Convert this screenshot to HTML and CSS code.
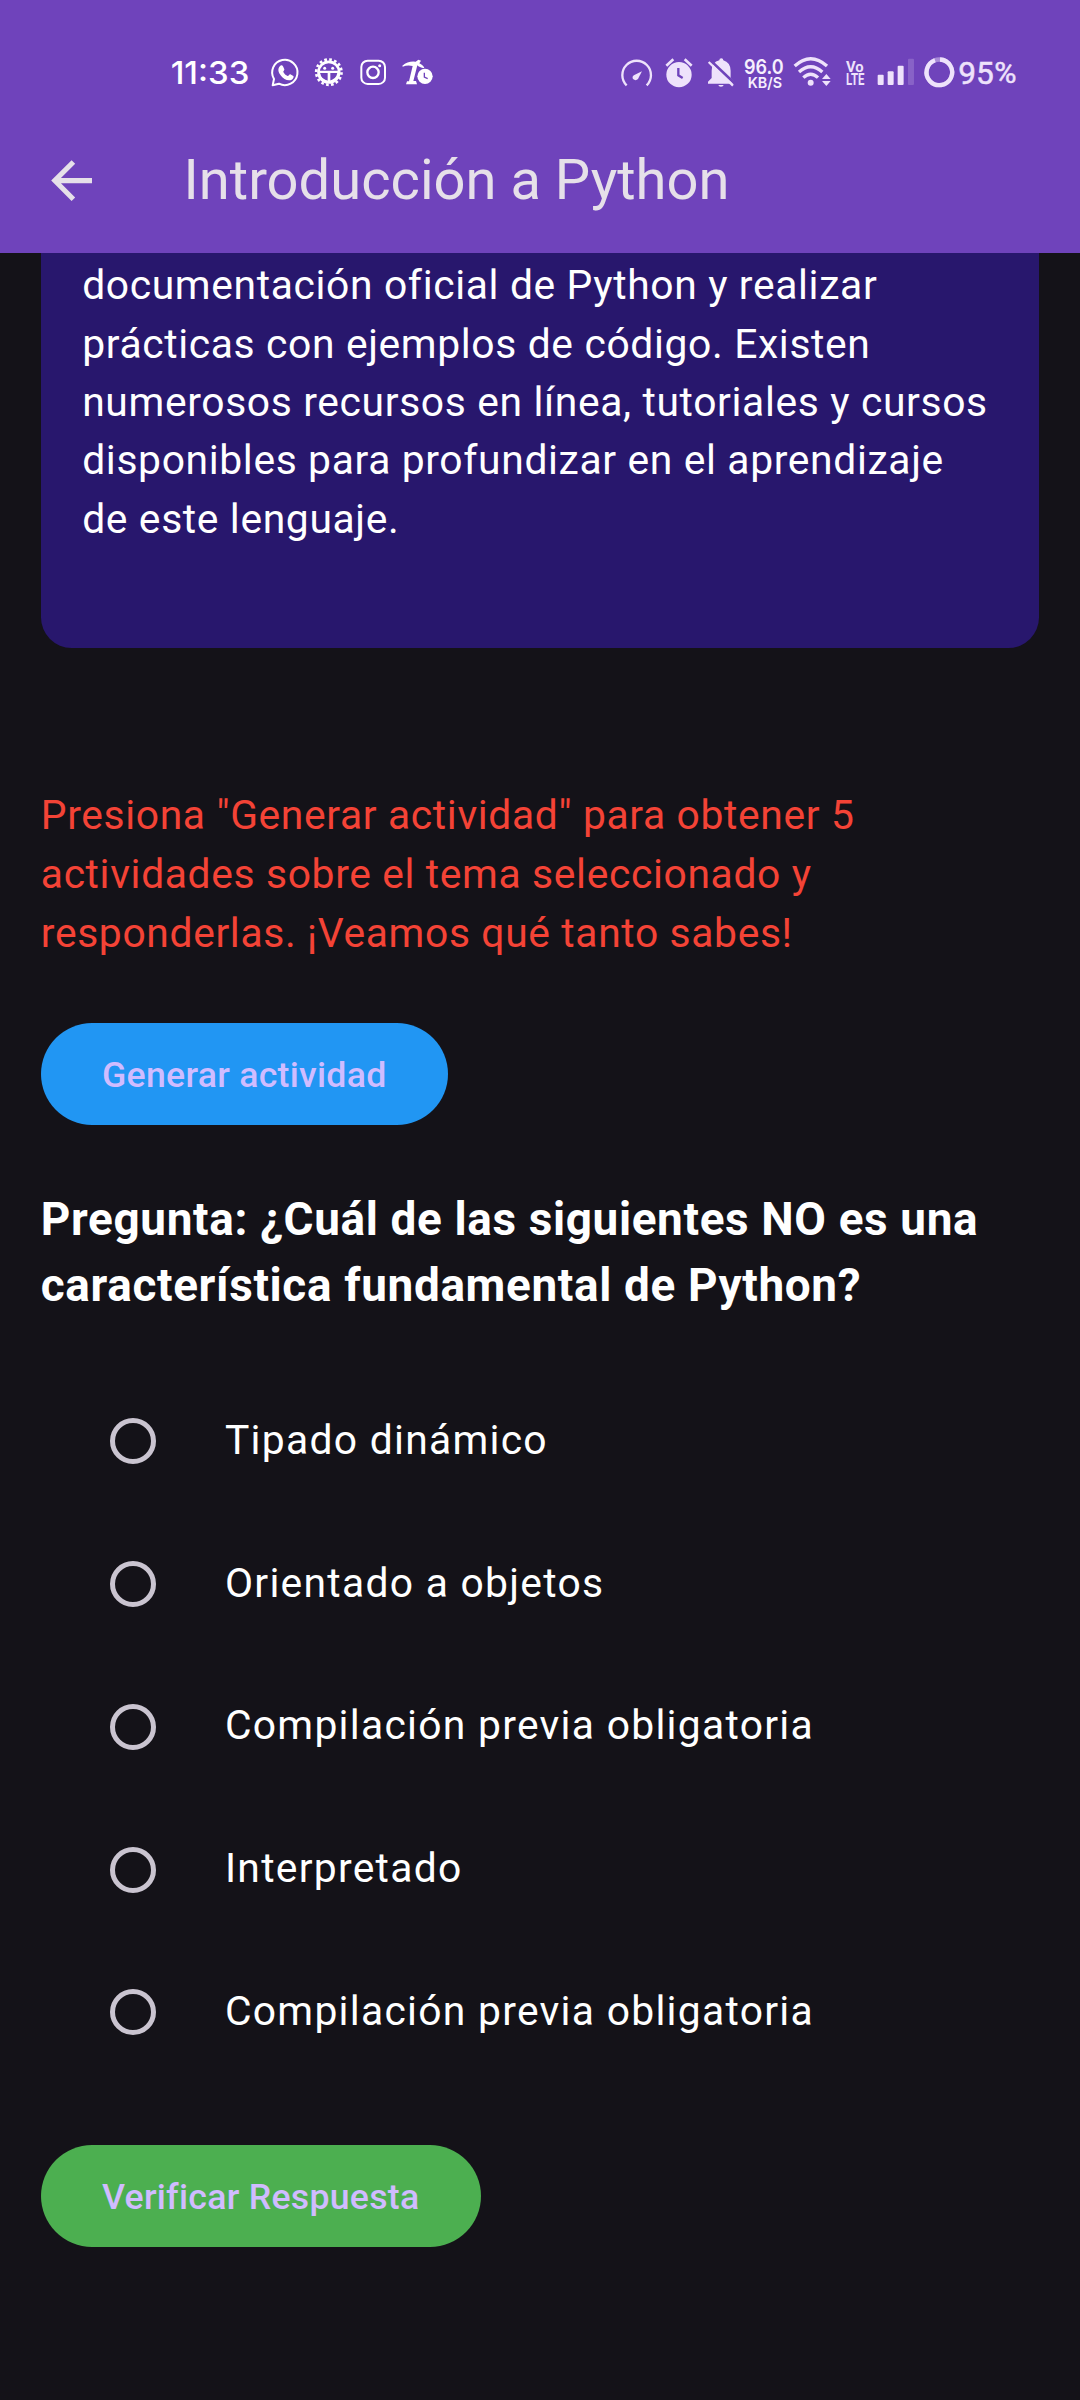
FILE: index.html
```html
<!DOCTYPE html>
<html lang="es">
<head>
<meta charset="utf-8">
<title>Introducción a Python</title>
<link rel="stylesheet" href="styles.css">
</head>
<body>
<div class="screen">
  <header class="top">
    <div class="status">
      <svg class="s-time" viewBox="60 50 240 90"><text x="62" y="131" font-size="95" font-weight="500" textLength="236" lengthAdjust="spacingAndGlyphs">11:33</text></svg>
      <svg class="s-whatsapp" viewBox="360 50 90 90"><path d="M372 116A38 38 0 1 1 387 130L368 135Z" fill="none" stroke="currentColor" stroke-width="6" stroke-linejoin="round"/><path d="M390 77c4-4 8-2 10 3l3 7c1 3-4 6-3 8 3 6 7 9 13 12 3 1 5-6 8-5l9 5c3 2-1 9-5 11-12 5-25-3-32-12-7-8-12-20-3-29z"/></svg>
      <svg class="s-gear" viewBox="493 50 90 90"><circle cx="537.500" cy="95.500" r="38" fill="none" stroke="currentColor" stroke-width="8" stroke-dasharray="8 6.920"/><circle cx="537.500" cy="95.500" r="31" fill="none" stroke="currentColor" stroke-width="8"/><path d="M505 91H570V98H542V128H534V98H505Z"/><circle cx="525" cy="84" r="4.500"/><circle cx="549" cy="84" r="4.500"/><path d="M511 98Q514 117 537 122Q560 117 563 98L570 98Q565 128 537 128Q510 128 505 98Z"/></svg>
      <svg class="s-insta" viewBox="624 50 90 90"><rect x="634" y="61" width="71" height="70" rx="19" fill="none" stroke="currentColor" stroke-width="6"/><circle cx="669" cy="96" r="17" fill="none" stroke="currentColor" stroke-width="7"/><circle cx="689" cy="76" r="4.500"/></svg>
      <svg class="s-pick" viewBox="752 50 98 90"><path d="M756 76Q774 61 796 64L804 58L812 61L807 69Q821 77 822 84Q806 81 801 75L789 122H797L800 132H767L770 123H776L787 77Q772 73 757 79Z"/><circle cx="824" cy="108" r="23"/><path d="M822 97V110L832 115" fill="none" class="cut" stroke-width="4"/></svg>

      <div class="status-right">
        <svg class="s-speed" viewBox="60 50 100 90"><path d="M80 135A43 43 0 1 1 140 135" fill="none" stroke="currentColor" stroke-width="7"/><path d="M126 93L114 116Q107 123 99 116Q95 109 103 104Z"/></svg>
        <svg class="s-alarm" viewBox="193 50 90 90"><circle cx="238" cy="103" r="38"/><path d="M200 76L221 57M276 76L255 57" stroke="currentColor" stroke-width="8"/><path d="M236 83V105L249 113" fill="none" class="cut" stroke-width="7"/></svg>
        <svg class="s-bell" viewBox="320 50 85 90"><path d="M323 130V124L334 113V91Q335 65 357 60Q357 54 363 54Q369 54 369 60Q390 66 391 91V113L401 124V130Z"/><path d="M354 134H370Q369 139 362 139Q355 139 354 134Z"/><path d="M329 59L405 131" class="cut" stroke-width="8"/><path d="M325 65L398 136" stroke="currentColor" stroke-width="7"/></svg>
        <svg class="s-net" viewBox="430 50 125 100"><text x="433" y="100" font-size="62" font-weight="600" textLength="119" lengthAdjust="spacingAndGlyphs">96.0</text><text x="444" y="142" font-size="45" font-weight="600" textLength="103" lengthAdjust="spacingAndGlyphs">KB/S</text></svg>
        <svg class="s-wifi" viewBox="580 50 116 90"><g fill="none" stroke="currentColor" stroke-width="10"><path d="M585 77Q633 33 682 77"/><path d="M598 95Q633 63 668 95"/><path d="M611 112Q633 91 655 112"/></g><circle cx="633" cy="127" r="9"/><path d="M667 116L680 101L693 116ZM667 122H693L680 137Z"/></svg>
        <svg class="s-volte" viewBox="74 50 60 90"><text x="77" y="94" font-size="46" font-weight="700" textLength="53" lengthAdjust="spacingAndGlyphs">Vo</text><text x="77" y="134" font-size="50" font-weight="700" textLength="55" lengthAdjust="spacingAndGlyphs">LTE</text></svg>
        <svg class="s-signal" viewBox="172 50 112 90"><rect x="174" y="103" width="18" height="31" rx="3"/><rect x="204" y="93" width="18" height="41" rx="3"/><rect x="234" y="76" width="18" height="58" rx="3"/><rect x="265" y="55" width="18" height="79" rx="3" opacity=".2"/></svg>
        <svg class="s-battery" viewBox="308 50 98 90"><circle cx="357" cy="96" r="38.500" fill="none" stroke="currentColor" stroke-width="13" opacity=".45"/><path d="M359 57.500A38.500 38.500 0 1 1 344 59.700" fill="none" stroke="currentColor" stroke-width="13"/></svg>
        <svg class="s-percent" viewBox="418 50 174 90"><text x="416" y="130" font-size="95" font-weight="400">95</text><text x="524" y="127" font-size="91" font-weight="400">%</text></svg>
      </div>
    </div>
    <div class="appbar">
      <svg class="back" viewBox="0 0 24 24"><path d="M20 11H7.830l5.590-5.590L12 4l-8 8 8 8 1.410-1.410L7.830 13H20v-2z"/></svg>
      <h1>Introducción a Python</h1>
    </div>
  </header>
  <main>
    <section class="card">documentación oficial de Python y realizar<br>prácticas con ejemplos de código. Existen<br>numerosos recursos en línea, tutoriales y cursos<br>disponibles para profundizar en el aprendizaje<br>de este lenguaje.</section>
    <p class="hint">Presiona "Generar actividad" para obtener 5<br>actividades sobre el tema seleccionado y<br>responderlas. ¡Veamos qué tanto sabes!</p>
    <button class="btn btn-blue">Generar actividad</button>
    <h2>Pregunta: ¿Cuál de las siguientes NO es una<br>característica fundamental de Python?</h2>
    <ul class="options">
      <li><i class="radio"></i><span>Tipado dinámico</span></li>
      <li><i class="radio"></i><span>Orientado a objetos</span></li>
      <li><i class="radio"></i><span>Compilación previa obligatoria</span></li>
      <li><i class="radio"></i><span>Interpretado</span></li>
      <li><i class="radio"></i><span>Compilación previa obligatoria</span></li>
    </ul>
    <button class="btn btn-green">Verificar Respuesta</button>
  </main>
</div>
</body>
</html>
```
FILE: styles.css
```css
* { box-sizing: border-box; margin: 0; padding: 0; }
body { background: #141218; font-family: Roboto, sans-serif; color: #fff; }
.screen { width: 1080px; height: 2400px; overflow: hidden; }
.top { height: 252.700px; background: #6f43bb; }
svg { display: block; flex: none; fill: currentColor; overflow: visible; }
.cut { stroke: #6f43bb; }

.status { display: flex; height: 108px; padding: 56.700px 62.700px 0 170px; align-items: flex-start; color: #fff; }
.status svg { height: 30px; font-family: Inter, sans-serif; }
.s-time { width: 80px; }
.s-whatsapp { width: 30px; margin-left: 20px; }
.s-gear { width: 30px; margin-left: 14.300px; }
.s-insta { width: 30px; margin-left: 13.700px; }
.s-pick { width: 32.700px; margin-left: 12.700px; }
.status-right { display: flex; margin-left: auto; color: #eee2fb; }
.s-speed { width: 33.300px; }
.s-alarm { width: 30px; margin-left: 11px; }
.s-bell { width: 28.300px; margin-left: 12.400px; }
.status .s-net { width: 41.700px; height: 33.300px; margin-left: 8.300px; color: #f6effd; }
.s-wifi { width: 38.700px; margin-left: 8.300px; }
.s-volte { width: 20px; margin-left: 12.700px; }
.s-signal { width: 37.300px; margin-left: 12.600px; }
.s-battery { width: 32.700px; margin-left: 8px; }
.s-percent { width: 58px; margin-left: 4px; }
.status .s-volte, .status .s-percent { font-family: Roboto, sans-serif; }
.s-percent { stroke: currentColor; stroke-width: 1.500px; }

.appbar { display: flex; align-items: center; height: 144.700px; padding-left: 41px; gap: 81.400px; color: #e6e0e9; }
.back { width: 61.200px; height: 61.200px; }
h1 { font-size: 56.100px; font-weight: 400; line-height: 71px; }

main { display: flex; flex-direction: column; align-items: flex-start; padding: 0 40.800px; }
.card { width: 100%; height: 395px; padding: 3.500px 40px 0 41.400px; border-radius: 0 0 30.600px 30.600px; background: #28176d; font-size: 40.800px; line-height: 58.340px; letter-spacing: .64px; white-space: nowrap; }
.hint { margin-top: 138.600px; color: #f44336; font-size: 40.800px; line-height: 58.700px; letter-spacing: .64px; white-space: nowrap; }
.btn { height: 102px; border: 0; border-radius: 51px; padding: 3px 61.200px 0; font: 500 35.700px/51px Roboto, sans-serif; letter-spacing: .255px; color: #d0bcff; white-space: nowrap; }
.btn-blue { margin-top: 60.600px; background: #2196f3; }
.btn-green { margin-top: 61px; background: #4caf50; }
h2 { margin-top: 62.500px; font-size: 45.900px; font-weight: 700; line-height: 65.640px; letter-spacing: .64px; white-space: nowrap; }
.options { list-style: none; margin-top: 51px; padding-left: 69.200px; }
.options li { display: flex; align-items: center; gap: 69px; height: 142.800px; font-size: 40.800px; line-height: 61.200px; letter-spacing: 1.275px; color: #fff; white-space: nowrap; }
.options span { padding-bottom: 1.500px; }
.radio { width: 46px; height: 46px; border: 5px solid #cac4d0; border-radius: 50%; }
```
